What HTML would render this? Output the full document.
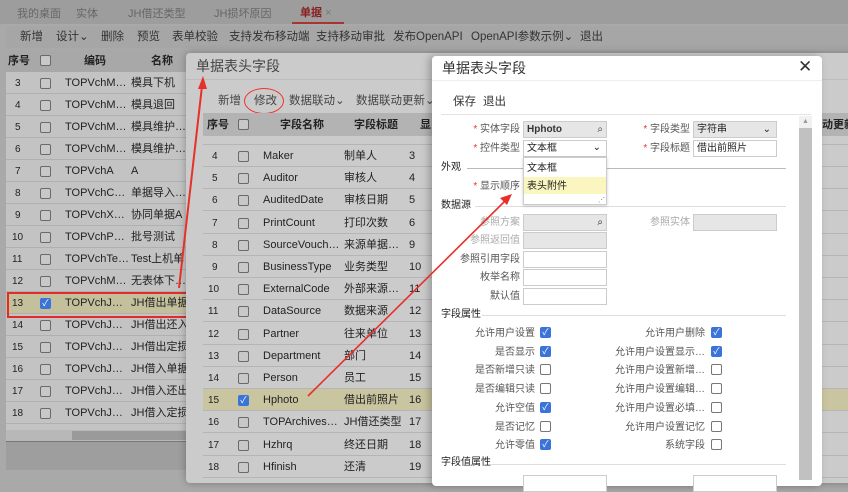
<!DOCTYPE html>
<html><head><meta charset="utf-8"><style>
*{box-sizing:border-box;margin:0;padding:0}
body{width:848px;height:480px;overflow:hidden;position:relative;background:#a9a9a9;font-family:"Liberation Sans","Noto Sans CJK SC",sans-serif;font-size:11px;line-height:13px;color:#222}
.a{position:absolute;white-space:nowrap}
.cb{position:absolute;width:11px;height:11px;border:1px solid #6a6a6a;border-radius:2px;background:#c8c8c8}
.cbw{position:absolute;width:11px;height:11px;border:1px solid #777;border-radius:2px;background:#fff}
.ck{position:absolute;width:11px;height:11px;border-radius:2px;background:#3b74d8;color:#fff;font-size:9px;line-height:11px;text-align:center}
.lbl{position:absolute;text-align:right;color:#555;font-size:10px;line-height:12px;white-space:nowrap}
.inp{position:absolute;height:17px;border:1px solid #ccc;background:#fff;font-size:10px;line-height:15px;padding-left:3px}
.g{background:#e6e6e6}
.red{color:#e33}
.hr{position:absolute;height:1px;background:#c8c8c8}
</style></head><body>
<div class="a" style="left:0;top:0;width:848px;height:24px;background:#9d9d9d"></div>
<div class="a" style="left:17px;top:8px;color:#666">我的桌面</div>
<div class="a" style="left:76px;top:8px;color:#666">实体</div>
<div class="a" style="left:128px;top:8px;color:#666">JH借还类型</div>
<div class="a" style="left:214px;top:8px;color:#666">JH损坏原因</div>
<div class="a" style="left:300px;top:7px;color:#8a1d1d;font-weight:bold">单据 <span style="color:#777;font-weight:normal">×</span></div>
<div class="a" style="left:292px;top:22px;width:52px;height:2px;background:#a33"></div>
<div class="a" style="left:6px;top:26px;width:842px;height:22px;background:#a6a6a6"></div>
<div class="a" style="left:20px;top:31px;font-size:11.5px;color:#333">新增</div>
<div class="a" style="left:56px;top:31px;font-size:11.5px;color:#333">设计⌄</div>
<div class="a" style="left:101px;top:31px;font-size:11.5px;color:#333">删除</div>
<div class="a" style="left:137px;top:31px;font-size:11.5px;color:#333">预览</div>
<div class="a" style="left:172px;top:31px;font-size:11.5px;color:#333">表单校验</div>
<div class="a" style="left:229px;top:31px;font-size:11.5px;color:#333">支持发布移动端</div>
<div class="a" style="left:316px;top:31px;font-size:11.5px;color:#333">支持移动审批</div>
<div class="a" style="left:393px;top:31px;font-size:11.5px;color:#333">发布OpenAPI</div>
<div class="a" style="left:471px;top:31px;font-size:11.5px;color:#333">OpenAPI参数示例⌄</div>
<div class="a" style="left:580px;top:31px;font-size:11.5px;color:#333">退出</div>
<div class="a" style="left:6px;top:50px;width:180px;height:380px;background:#c3c3c3"></div>
<div class="a" style="left:6px;top:50px;width:180px;height:22px;background:#a8a8a8"></div>
<div class="a" style="left:8px;top:55px;font-weight:bold">序号</div>
<div class="cb" style="left:40px;top:55px"></div>
<div class="a" style="left:84px;top:55px;font-weight:bold">编码</div>
<div class="a" style="left:151px;top:55px;font-weight:bold">名称</div>
<div id="lt"></div>
<div class="a" style="left:6px;top:430px;width:180px;height:11px;background:#b8b8b8"></div>
<div class="a" style="left:72px;top:431px;width:114px;height:9px;background:#9a9a9a"></div>
<div class="a" style="left:6px;top:441px;width:180px;height:1px;background:#777"></div>
<div class="a" style="left:6px;top:442px;width:180px;height:28px;background:#9e9e9e"></div>
<div class="a" style="left:7px;top:292px;width:183px;height:26px;border:2px solid #e52a2a"></div>
<div class="a" style="left:186px;top:53px;width:680px;height:430px;background:#cbcbcb;border-radius:4px;box-shadow:0 0 8px rgba(0,0,0,.3)"></div>
<div class="a" style="left:196px;top:58px;font-size:14px;line-height:17px;color:#444">单据表头字段</div>
<div class="a" style="left:186px;top:79px;width:680px;height:1px;background:#bdbdbd"></div>
<div class="a" style="left:218px;top:95px;font-size:11.5px;color:#444">新增</div>
<div class="a" style="left:254px;top:95px;font-size:11.5px;color:#444">修改</div>
<div class="a" style="left:244px;top:88px;width:40px;height:26px;border:1.5px solid #e33;border-radius:50%"></div>
<div class="a" style="left:289px;top:95px;font-size:11.5px;color:#444">数据联动⌄</div>
<div class="a" style="left:356px;top:95px;font-size:11.5px;color:#444">数据联动更新⌄</div>
<div class="a" style="left:203px;top:113px;width:660px;height:23px;background:#b3b3b3"></div>
<div class="a" style="left:207px;top:119px;font-weight:bold">序号</div>
<div class="cb" style="left:238px;top:119px"></div>
<div class="a" style="left:280px;top:119px;font-weight:bold">字段名称</div>
<div class="a" style="left:354px;top:119px;font-weight:bold">字段标题</div>
<div class="a" style="left:420px;top:119px;font-weight:bold">显</div>
<div class="a" style="left:822px;top:119px;font-weight:bold">动更新</div>
<div id="mt"></div>
<div class="a" style="left:432px;top:56px;width:390px;height:430px;background:#fff;border-radius:4px;box-shadow:-3px 0 8px rgba(0,0,0,.25)"></div>
<div class="a" style="left:442px;top:60px;font-size:14px;line-height:17px;color:#333">单据表头字段</div>
<div class="a" style="left:798px;top:58px;font-size:17px;line-height:18px;color:#333">✕</div>
<div class="hr" style="left:432px;top:80px;width:390px;background:#eee"></div>
<div class="a" style="left:453px;top:96px;font-size:11.5px;color:#333">保存</div>
<div class="a" style="left:483px;top:96px;font-size:11.5px;color:#333">退出</div>
<div class="hr" style="left:441px;top:114px;width:370px;background:#e4e4e4"></div>
<div class="a" style="left:799px;top:116px;width:13px;height:364px;background:#c1c1c1"></div>
<div class="a" style="left:799px;top:116px;width:13px;height:12px;background:#f1f1f1;color:#999;font-size:7px;text-align:center;line-height:12px">▲</div>
<div class="lbl" style="left:440px;top:124px;width:80px"><span class="red">* </span>实体字段</div>
<div class="inp g" style="left:523px;top:121px;width:84px;font-weight:bold;color:#333">Hphoto<span style="position:absolute;right:3px;top:0;font-weight:normal">&#x2315;</span></div>
<div class="lbl" style="left:610px;top:124px;width:80px"><span class="red">* </span>字段类型</div>
<div class="inp g" style="left:693px;top:121px;width:84px">字符串<span style="position:absolute;right:5px;top:0">⌄</span></div>
<div class="lbl" style="left:440px;top:143px;width:80px"><span class="red">* </span>控件类型</div>
<div class="inp" style="left:523px;top:140px;width:84px">文本框<span style="position:absolute;right:5px;top:-1px">⌄</span></div>
<div class="lbl" style="left:610px;top:143px;width:80px"><span class="red">* </span>字段标题</div>
<div class="inp" style="left:693px;top:140px;width:84px">借出前照片</div>
<div class="a" style="left:523px;top:157px;width:84px;height:48px;background:#fff;border:1px solid #ccc;box-shadow:0 1px 3px rgba(0,0,0,.2);z-index:3"></div>
<div class="a" style="left:527px;top:162px;font-size:10px;z-index:4">文本框</div>
<div class="a" style="left:524px;top:177px;width:82px;height:17px;background:#fbf5c0;z-index:4"></div>
<div class="a" style="left:527px;top:180px;font-size:10px;z-index:5">表头附件</div>
<div class="a" style="left:598px;top:194px;font-size:7px;color:#777;z-index:5">⋰</div>
<div class="a" style="left:441px;top:161px;font-size:10px">外观</div>
<div class="hr" style="left:467px;top:168px;width:319px;background:#bbb"></div>
<div class="lbl" style="left:440px;top:181px;width:80px"><span class="red">* </span>显示顺序</div>
<div class="a" style="left:441px;top:199px;font-size:10px">数据源</div>
<div class="hr" style="left:475px;top:206px;width:311px;background:#ddd"></div>
<div class="lbl" style="left:440px;top:217px;width:80px;color:#aaa">参照方案</div>
<div class="inp g" style="left:523px;top:214px;width:84px"><span style="position:absolute;right:3px;top:0">&#x2315;</span></div>
<div class="lbl" style="left:610px;top:217px;width:80px;color:#aaa">参照实体</div>
<div class="inp g" style="left:693px;top:214px;width:84px"></div>
<div class="lbl" style="left:440px;top:235px;width:80px;color:#aaa">参照返回值</div>
<div class="inp g" style="left:523px;top:232px;width:84px"></div>
<div class="lbl" style="left:440px;top:254px;width:80px">参照引用字段</div>
<div class="inp" style="left:523px;top:251px;width:84px"></div>
<div class="lbl" style="left:440px;top:272px;width:80px">枚举名称</div>
<div class="inp" style="left:523px;top:269px;width:84px"></div>
<div class="lbl" style="left:440px;top:291px;width:80px">默认值</div>
<div class="inp" style="left:523px;top:288px;width:84px"></div>
<div class="a" style="left:441px;top:308px;font-size:10px">字段属性</div>
<div class="hr" style="left:482px;top:315px;width:304px;background:#ddd"></div>
<div id="cks"></div>
<div class="a" style="left:441px;top:456px;font-size:10px">字段值属性</div>
<div class="hr" style="left:490px;top:464px;width:296px;background:#ddd"></div>
<div class="inp" style="left:523px;top:475px;width:84px"></div>
<div class="inp" style="left:693px;top:475px;width:84px"></div>
<svg class="a" style="left:0;top:0;z-index:10" width="848" height="480">
<line x1="179" y1="288" x2="202" y2="86" stroke="#e8302a" stroke-width="2"/>
<polygon points="203,76 198,89 207,89" fill="#e8302a"/>
<line x1="308" y1="396" x2="505" y2="201" stroke="#e8302a" stroke-width="1.6"/>
<polygon points="512,194 500,198 507,205" fill="#e8302a"/>
</svg>
<script>
var L=[["3","TOPVchM…","模具下机"],["4","TOPVchM…","模具退回"],["5","TOPVchM…","模具维护…"],["6","TOPVchM…","模具维护…"],["7","TOPVchA","A"],["8","TOPVchC…","单据导入…"],["9","TOPVchX…","协同单据A"],["10","TOPVchP…","批号测试"],["11","TOPVchTe…","Test上机单"],["12","TOPVchM…","无表体下…"],["13","TOPVchJ…","JH借出单据"],["14","TOPVchJ…","JH借出还入"],["15","TOPVchJ…","JH借出定损"],["16","TOPVchJ…","JH借入单据"],["17","TOPVchJ…","JH借入还出"],["18","TOPVchJ…","JH借入定损"]];
var h="";L.forEach(function(r,i){var y=72+i*22;var sel=r[0]=="13";
h+='<div class="a" style="left:6px;top:'+y+'px;width:180px;height:22px;border-bottom:1px solid #b0b0b0;'+(sel?'background:#c4c09c':'')+'"></div>';
h+='<div class="a" style="left:'+(r[0].length>1?12:15)+'px;top:'+(y+5)+'px;font-size:10px">'+r[0]+'</div>';
h+=sel?'<div class="ck" style="left:40px;top:'+(y+6)+'px">✓</div>':'<div class="cb" style="left:40px;top:'+(y+6)+'px"></div>';
h+='<div class="a" style="left:65px;top:'+(y+5)+'px">'+r[1]+'</div><div class="a" style="left:131px;top:'+(y+5)+'px">'+r[2]+'</div>';});
document.getElementById("lt").innerHTML=h;
var M=[["4","Maker","制单人","3"],["5","Auditor","审核人","4"],["6","AuditedDate","审核日期","5"],["7","PrintCount","打印次数","6"],["8","SourceVouch…","来源单据…","9"],["9","BusinessType","业务类型","10"],["10","ExternalCode","外部来源…","11"],["11","DataSource","数据来源","12"],["12","Partner","往来单位","13"],["13","Department","部门","14"],["14","Person","员工","15"],["15","Hphoto","借出前照片","16"],["16","TOPArchives…","JH借还类型","17"],["17","Hzhrq","终还日期","18"],["18","Hfinish","还清","19"]];
h='<div class="a" style="left:203px;top:136px;width:660px;height:9px;border-bottom:1px solid #b5b5b5"></div>';
M.forEach(function(r,i){var y=145+i*22.2;var sel=r[0]=="15";
h+='<div class="a" style="left:203px;top:'+y+'px;width:660px;height:22px;border-bottom:1px solid #b5b5b5;'+(sel?'background:#c9c5a0':'')+'"></div>';
h+='<div class="a" style="left:'+(r[0].length>1?208:212)+'px;top:'+(y+5)+'px;font-size:10px">'+r[0]+'</div>';
h+=sel?'<div class="ck" style="left:238px;top:'+(y+6)+'px">✓</div>':'<div class="cb" style="left:238px;top:'+(y+6)+'px"></div>';
h+='<div class="a" style="left:263px;top:'+(y+5)+'px">'+r[1]+'</div><div class="a" style="left:344px;top:'+(y+5)+'px">'+r[2]+'</div><div class="a" style="left:409px;top:'+(y+5)+'px">'+r[3]+'</div>';});
document.getElementById("mt").innerHTML=h;
var C=[["允许用户设置",1,"允许用户删除",1],["是否显示",1,"允许用户设置显示…",1],["是否新增只读",0,"允许用户设置新增…",0],["是否编辑只读",0,"允许用户设置编辑…",0],["允许空值",1,"允许用户设置必填…",0],["是否记忆",0,"允许用户设置记忆",0],["允许零值",1,"系统字段",0]];
h="";C.forEach(function(r,i){var y=327+i*18.7;
h+='<div class="lbl" style="left:440px;top:'+(y+1)+'px;width:95px">'+r[0]+'</div>';
h+=r[1]?'<div class="ck" style="left:540px;top:'+y+'px">✓</div>':'<div class="cbw" style="left:540px;top:'+y+'px"></div>';
h+='<div class="lbl" style="left:560px;top:'+(y+1)+'px;width:145px">'+r[2]+'</div>';
h+=r[3]?'<div class="ck" style="left:711px;top:'+y+'px">✓</div>':'<div class="cbw" style="left:711px;top:'+y+'px"></div>';});
document.getElementById("cks").innerHTML=h;
</script>
</body></html>
